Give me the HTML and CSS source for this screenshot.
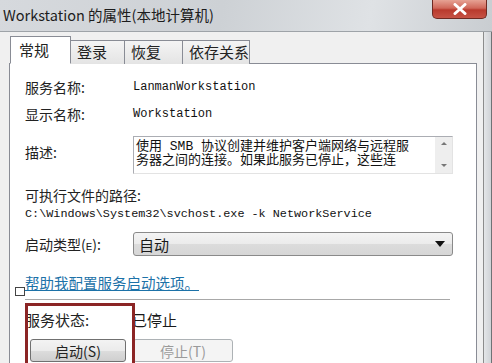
FILE: index.html
```html
<!DOCTYPE html>
<html lang="zh-CN">
<head>
  <meta charset="UTF-8" />
  <title>Workstation 的属性(本地计算机)</title>
  <link rel="stylesheet" href="styles.css">
</head>
<body>
  <div class="window">
    <div class="titlebar">
      <span class="title">Workstation 的属性(本地计算机)</span>
      <div class="close">
        <svg width="14" height="12" viewBox="0 0 14 12"><path d="M2 1.5 L12 10.5 M12 1.5 L2 10.5" stroke="#fff" stroke-width="3" stroke-linecap="round"/></svg>
      </div>
    </div>

    <div class="main">
      <div class="body">
        <div class="tabs">
          <div class="tab active">常规</div>
          <div class="tab">登录</div>
          <div class="tab">恢复</div>
          <div class="tab">依存关系</div>
        </div>

        <div class="panel">
          <div class="row r-name">
            <span class="label">服务名称:</span>
            <span class="mono">LanmanWorkstation</span>
          </div>
          <div class="row r-display">
            <span class="label">显示名称:</span>
            <span class="mono">Workstation</span>
          </div>
          <div class="row r-desc">
            <span class="label">描述:</span>
            <div class="textarea">
              <div class="ta-text">
                <div>使用 SMB 协议创建并维护客户端网络与远程服</div>
                <div>务器之间的连接。如果此服务已停止，这些连</div>
              </div>
              <div class="scroll">
                <span class="arr up"></span>
                <span class="arr down"></span>
              </div>
            </div>
          </div>
          <div class="row r-exe">
            <span class="label wide">可执行文件的路径:</span>
          </div>
          <div class="row r-path">
            <span class="mono path">C:\Windows\System32\svchost.exe -k NetworkService</span>
          </div>
          <div class="row r-start">
            <span class="label">启动类型(<span class="key">E</span>):</span>
            <div class="select">
              <span>自动</span>
              <span class="caret"></span>
            </div>
          </div>
          <div class="row r-link">
            <a class="link" href="#">帮助我配置服务启动选项。</a>
          </div>
          <div class="sep"></div>
          <div class="row r-status">
            <span class="label">服务状态:</span>
            <span class="state">已停止</span>
          </div>
          <div class="row r-buttons">
            <button class="btn">启动(S)</button>
            <button class="btn disabled">停止(T)</button>
          </div>
        </div>
      </div>
      <div class="frame"></div>
    </div>

    <!-- annotations drawn over the dialog -->
    <div class="mark-square"></div>
    <div class="mark-box"></div>
  </div>
</body>
</html>
```

FILE: styles.css
```css
:root{
  --face:#f0f0f0;
  --edge:#898c95;
  --cjk:"Noto Sans CJK SC","Noto Sans",sans-serif;
  --mono:"Liberation Mono","Noto Sans CJK SC",monospace;
}
*{box-sizing:border-box;}
html,body{margin:0;}
body{
  font-family:var(--cjk);
  color:#1a1a1a;
  background:var(--face);
}
.window{
  position:relative;
  width:492px;
  height:363px;
  overflow:hidden;
  background:var(--face);
}

/* title bar */
.titlebar{
  position:relative;
  height:32px;
  padding:0 0 0 3px;
  display:flex;
  align-items:center;
  background:linear-gradient(100deg,#d6d9dd 0%,#cdd1d5 45%,#dfe2e5 75%,#c9cdd1 100%);
  border-bottom:1px solid #9ea3a8;
}
.title{
  font-size:14.5px;
  color:#1c1c1c;
  margin-top:-3px;
}
.close{
  position:absolute;
  top:0;
  right:5px;
  width:55px;
  height:19px;
  display:flex;
  align-items:center;
  justify-content:center;
  border:1px solid #6e2a22;
  border-top:none;
  border-radius:0 0 5px 5px;
  background:linear-gradient(#e6a294 0%,#d0685a 45%,#b93a2d 55%,#c65345 100%);
}

/* body */
.main{
  display:flex;
  height:331px;
}
.body{
  flex:1;
  padding:5px 6px 0 9px;
  border-right:1px solid #8c8c8c;
}
.frame{
  width:8px;
  background:linear-gradient(90deg,#e4e6e8,#cfd2d6);
  border-right:1px solid #6f7275;
}

.tabs{
  display:flex;
  align-items:flex-end;
  height:27px;
  margin-bottom:-1px;
  position:relative;
  z-index:1;
}
.tab{
  height:24px;
  padding:0 0 0 6px;
  font-size:15px;
  line-height:22px;
  border:1px solid var(--edge);
  border-bottom:none;
  margin-left:-1px;
  background:linear-gradient(#f4f4f4,#e4e4e4);
  color:#222;
}
.tab:nth-child(2){width:55px;}
.tab:nth-child(3){width:59px;}
.tab:nth-child(4){width:68px;}
.tab.active{
  width:61px;
  height:28px;
  margin-left:1px;
  padding-left:8px;
  line-height:26px;
  background:#fff;
  border-bottom:1px solid #fff;
  z-index:2;
}

.panel{
  position:relative;
  height:300px;
  background:#fff;
  border:1px solid var(--edge);
  border-bottom:none;
  padding:13px 0 0 15px;
}
.row{
  display:flex;
  align-items:center;
}
.label{
  width:108px;
  flex:none;
  font-size:14px;
  color:#222;
}
.label.wide{width:auto;}
.key{font-family:var(--mono);font-size:11px;}
.mono{
  font-family:var(--mono);
  font-size:12px;
  color:#111;
}

.r-name{height:20px;}
.r-display{height:20px;margin-top:7px;}
.r-desc{height:38px;margin-top:12px;align-items:flex-start;}
.r-desc .label{margin-top:6px;line-height:20px;}
.r-exe{height:20px;margin-top:11px;}
.r-path{height:18px;}
.path{font-size:11.8px;}
.r-start{height:24px;margin-top:9px;}
.r-link{height:18px;margin-top:17px;}
.r-status{height:18px;margin-top:10px;}
.r-buttons{height:23px;margin-top:11px;padding-left:5px;gap:7px;}

.textarea{
  width:320px;
  height:38px;
  display:flex;
  border:1px solid #abadb3;
  border-right-color:#e3e3e3;
  border-bottom-color:#e3e3e3;
}
.ta-text{
  flex:1;
  padding:3px 0 0 2px;
  font-family:var(--mono);
  font-size:13px;
  line-height:14px;
  color:#111;
  white-space:nowrap;
  overflow:hidden;
}
.scroll{
  width:17px;
  background:#eeeeee;
  display:flex;
  flex-direction:column;
  justify-content:space-between;
  align-items:center;
  padding:5px 0 6px;
}
.arr{
  width:0;height:0;
  border-left:3px solid transparent;
  border-right:3px solid transparent;
}
.arr.up{border-bottom:3px solid #777;}
.arr.down{border-top:3px solid #777;}

.select{
  width:320px;
  height:24px;
  display:flex;
  align-items:center;
  justify-content:space-between;
  padding:0 7px 0 5px;
  font-size:15px;
  border:1px solid #8a8a8a;
  border-radius:3px;
  background:linear-gradient(#f4f4f4 0%,#ebebeb 50%,#dcdcdc 51%,#d6d6d6 100%);
}
.caret{
  width:0;height:0;
  border-left:5px solid transparent;
  border-right:5px solid transparent;
  border-top:6px solid #111;
}

.link{
  font-size:14.5px;
  color:#1d72a8;
  text-decoration:underline;
}
.sep{
  height:1px;
  margin:8px 26px 0 0;
  background:#a8a8a8;
}
.r-status .label{font-size:15px;}
.state{font-size:15px;margin-left:-1px;}

.btn{
  width:96px;
  height:23px;
  padding:0;
  font-family:var(--cjk);
  font-size:14px;
  color:#222;
  border:1px solid #707070;
  border-radius:3px;
  background:linear-gradient(#f3f3f3 0%,#ebebeb 50%,#dddddd 51%,#cfcfcf 100%);
}
.btn.disabled{
  width:100px;
  color:#9a9a9a;
  border-color:#adb2b5;
  background:#f4f4f4;
}

/* red annotation box and tiny square */
.mark-square{
  position:absolute;
  left:15px;
  top:287px;
  width:10px;
  height:9px;
  border:1px solid #444;
  background:#fff;
}
.mark-box{
  position:absolute;
  left:25px;
  top:303px;
  width:110px;
  height:70px;
  border:3px solid #8b2525;
}
```
